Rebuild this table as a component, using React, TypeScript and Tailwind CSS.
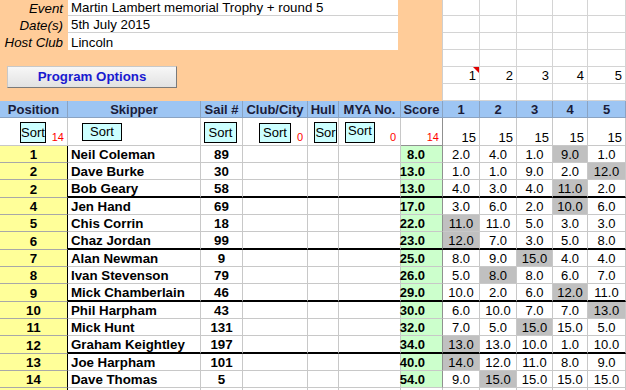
import React from "react";

const G =
  "grid grid-cols-[68px_133px_42px_65px_31px_62px_42px_37px_37px_36px_35px_38px]";
const NARROW = "font-['Liberation_Sans_Narrow','Arial_Narrow',sans-serif]";

type Row = {
  pos: number;
  name: string;
  sail: number;
  score: string;
  r: string[];
  d: number;
};

const rows: Row[] = [
  { pos: 1, name: "Neil Coleman", sail: 89, score: "8.0", r: ["2.0", "4.0", "1.0", "9.0", "1.0"], d: 3 },
  { pos: 2, name: "Dave Burke", sail: 30, score: "13.0", r: ["1.0", "1.0", "9.0", "2.0", "12.0"], d: 4 },
  { pos: 2, name: "Bob Geary", sail: 58, score: "13.0", r: ["4.0", "3.0", "4.0", "11.0", "2.0"], d: 3 },
  { pos: 4, name: "Jen Hand", sail: 69, score: "17.0", r: ["3.0", "6.0", "2.0", "10.0", "6.0"], d: 3 },
  { pos: 5, name: "Chis Corrin", sail: 18, score: "22.0", r: ["11.0", "11.0", "5.0", "3.0", "3.0"], d: 0 },
  { pos: 6, name: "Chaz Jordan", sail: 99, score: "23.0", r: ["12.0", "7.0", "3.0", "5.0", "8.0"], d: 0 },
  { pos: 7, name: "Alan Newman", sail: 9, score: "25.0", r: ["8.0", "9.0", "15.0", "4.0", "4.0"], d: 2 },
  { pos: 8, name: "Ivan Stevenson", sail: 79, score: "26.0", r: ["5.0", "8.0", "8.0", "6.0", "7.0"], d: 1 },
  { pos: 9, name: "Mick Chamberlain", sail: 46, score: "29.0", r: ["10.0", "2.0", "6.0", "12.0", "11.0"], d: 3 },
  { pos: 10, name: "Phil Harpham", sail: 43, score: "30.0", r: ["6.0", "10.0", "7.0", "7.0", "13.0"], d: 4 },
  { pos: 11, name: "Mick Hunt", sail: 131, score: "32.0", r: ["7.0", "5.0", "15.0", "15.0", "5.0"], d: 2 },
  { pos: 12, name: "Graham Keightley", sail: 197, score: "34.0", r: ["13.0", "13.0", "10.0", "1.0", "10.0"], d: 0 },
  { pos: 13, name: "Joe Harpham", sail: 101, score: "40.0", r: ["14.0", "12.0", "11.0", "8.0", "9.0"], d: 0 },
  { pos: 14, name: "Dave Thomas", sail: 5, score: "54.0", r: ["9.0", "15.0", "15.0", "15.0", "15.0"], d: 1 },
];

const headers = ["Position", "Skipper", "Sail #", "Club/City", "Hull", "MYA No.", "Score", "1", "2", "3", "4", "5"];

function InfoRow({ label, value, h, line }: { label: string; value: string; h: string; line: boolean }) {
  return (
    <div className={`flex ${h}`}>
      <div className="w-[68px] flex items-end justify-end pr-[5px] italic text-[13.3px] leading-[14px]">{label}</div>
      <div
        className={`w-[330px] bg-white flex items-end pl-[3px] text-[13.3px] leading-[14px] ${
          line ? "border-b border-[#d0d0d0]" : ""
        }`}
      >
        {value}
      </div>
    </div>
  );
}

function SortBtn({ cls, label = "Sort", top = false }: { cls: string; label?: string; top?: boolean }) {
  return (
    <div
      className={`${cls} bg-[#CCFFFF] border border-black flex justify-center overflow-hidden ${
        top ? "items-start pt-[1px]" : "items-center"
      } ${NARROW} text-[13px] leading-[14px]`}
    >
      {label}
    </div>
  );
}

function Red({ v, cls }: { v: string; cls: string }) {
  return <div className={`ml-auto self-end ${cls} text-[#ff0000] text-[11px] leading-[12px]`}>{v}</div>;
}

export default function App() {
  return (
    <div className="w-[626px] h-[390px] overflow-hidden bg-white font-['Liberation_Sans',Arial,sans-serif] text-black">
      {/* Top area */}
      <div className="flex h-[101px]">
        <div className="w-[442px] bg-[#FFCC99] flex flex-col">
          <InfoRow h="h-[16px]" label="Event" value="Martin Lambert memorial Trophy + round 5" line />
          <InfoRow h="h-[17px]" label="Date(s)" value="5th July 2015" line />
          <InfoRow h="h-[17px]" label="Host Club" value="Lincoln" line={false} />
          <div className="mt-[16px] ml-[7px] w-[170px] h-[22px] bg-linear-to-b from-[#f7f7f7] to-[#e2e2e2] border border-[#c8c8c8] border-b-[#7a7a7a] border-r-[#7a7a7a] flex items-center justify-center font-bold text-[13.3px] leading-[14px] text-[#1a1ad0]">
            Program Options
          </div>
        </div>
        <div className="w-[184px] border-l border-[#cfcfcf] grid grid-cols-[37px_37px_36px_35px_38px] grid-rows-[16px_17px_17px_17px_17px_17px]">
          {Array.from({ length: 30 }).map((_, i) => {
            const row = Math.floor(i / 5);
            const col = i % 5;
            return (
              <div
                key={i}
                className={`relative border-r border-b border-[#d4d4d4] flex items-end justify-end pr-[3px] text-[13px] leading-[14px] ${NARROW}`}
              >
                {row === 4 ? String(col + 1) : ""}
                {row === 4 && col === 0 ? (
                  <svg className="absolute top-0 right-0" width="6" height="6" viewBox="0 0 6 6">
                    <polygon points="0,0 6,0 6,6" fill="#e00000" />
                  </svg>
                ) : null}
              </div>
            );
          })}
        </div>
      </div>

      {/* Header row */}
      <div className={`${G} h-[17px] bg-[#9DC5F3]`}>
        {headers.map((h, i) => (
          <div
            key={i}
            className="border-r border-b border-[#8aa3c2] flex items-end justify-center font-bold text-[13px] leading-[14px] text-[#1a1c3a]"
          >
            {h}
          </div>
        ))}
      </div>

      {/* Sort row */}
      <div className={`${G} h-[28px]`}>
        <div className="border-r border-b border-[#c8c8c8] flex pl-[20px] pt-[4px] pb-[2px]">
          <SortBtn cls="w-[26px] h-[21px]" />
          <Red v="14" cls="pr-[3px]" />
        </div>
        <div className="border-r border-b border-[#c8c8c8] flex pl-[14px] pt-[5px]">
          <SortBtn cls="w-[40px] h-[18px]" />
        </div>
        <div className="border-r border-b border-[#c8c8c8] flex pl-[3px] pt-[4px]">
          <SortBtn cls="w-[33px] h-[21px]" />
        </div>
        <div className="border-r border-b border-[#c8c8c8] flex pl-[16px] pt-[5px] pb-[2px]">
          <SortBtn cls="w-[32px] h-[20px]" />
          <Red v="0" cls="pr-[4px]" />
        </div>
        <div className="border-r border-b border-[#c8c8c8] flex pl-[6px] pt-[4px]">
          <SortBtn cls="w-[23px] h-[21px]" label="Sor" />
        </div>
        <div className="border-r border-b border-[#c8c8c8] flex pl-[6px] pt-[4px] pb-[2px]">
          <SortBtn cls="w-[30px] h-[21px]" top />
          <Red v="0" cls="pr-[4px]" />
        </div>
        <div className="border-r border-b border-[#909090] flex pb-[2px]">
          <Red v="14" cls="pr-[3px]" />
        </div>
        {[0, 1, 2, 3, 4].map((c) => (
          <div
            key={c}
            className={`border-r border-b border-[#c8c8c8] flex items-end justify-end pr-[3px] text-[13px] leading-[14px] ${NARROW}`}
          >
            15
          </div>
        ))}
      </div>

      {/* Data rows */}
      {rows.map((r, idx) => {
        const thick = idx === 2 || idx === 5 || idx === 8 || idx === 11;
        const h = thick ? "h-[18px]" : "h-[17px]";
        const bb = thick ? "border-b-2 border-b-black" : "border-b border-b-[#c8c8c8]";
        return (
          <div key={idx} className={`${G} ${h}`}>
            <div className="bg-[#FFFF99] border-r border-r-black border-b border-b-[#a8a8a8] flex items-end justify-center font-bold text-[13.3px] leading-[14px]">
              {r.pos}
            </div>
            <div className={`border-r border-r-[#c8c8c8] ${bb} flex items-end pl-[3px] font-bold text-[13.3px] leading-[14px] whitespace-nowrap`}>
              {r.name}
            </div>
            <div className={`border-r border-r-[#c8c8c8] ${bb} flex items-end justify-center font-bold text-[13.3px] leading-[14px]`}>
              {r.sail}
            </div>
            <div className={`border-r border-r-[#c8c8c8] ${bb}`} />
            <div className={`border-r border-r-[#c8c8c8] ${bb}`} />
            <div className={`border-r border-r-[#c8c8c8] ${bb}`} />
            <div
              className={`bg-[#CCFFCC] border-r border-r-[#909090] ${bb} flex items-end justify-end pr-[17px] font-bold text-[13px] leading-[14px] ${NARROW}`}
            >
              {r.score}
            </div>
            {r.r.map((v, c) => (
              <div
                key={c}
                className={`${c === r.d ? "bg-[#C0C0C0]" : ""} border-r border-r-[#c8c8c8] ${bb} flex items-end justify-center text-[13px] leading-[14px] ${NARROW}`}
              >
                {v}
              </div>
            ))}
          </div>
        );
      })}
      <div className={`${G} h-[17px]`}>
        <div className="bg-[#FFFF99] border-r border-r-black" />
        {Array.from({ length: 11 }).map((_, i) => (
          <div key={i} className="border-r border-r-[#c8c8c8]" />
        ))}
      </div>
    </div>
  );
}
